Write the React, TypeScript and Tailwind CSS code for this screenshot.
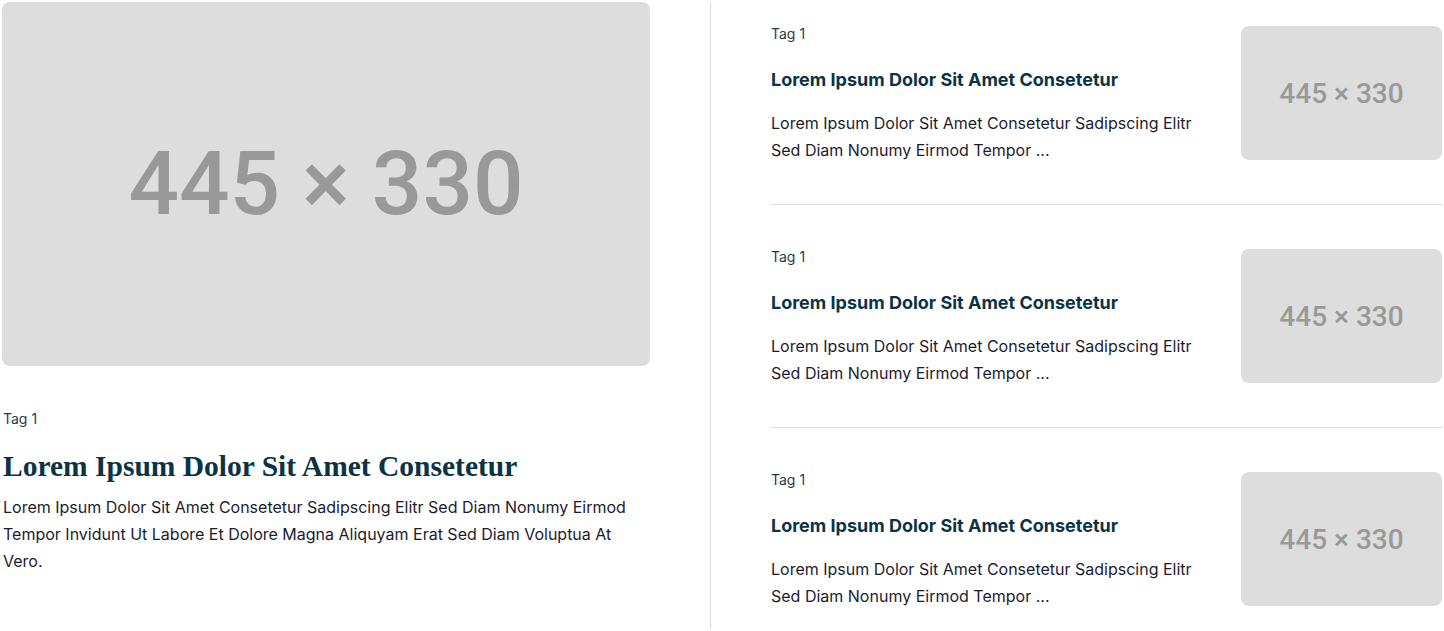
import React from "react";

const sans = { fontFamily: "Inter, 'Noto Sans', sans-serif" };

function Placeholder({ className, textClass }: { className: string; textClass: string }) {
  return (
    <div className={`flex items-center justify-center bg-[#dddddd] ${className}`}>
      <span className={`text-[#999999] font-medium ${textClass}`} style={{ fontFamily: "Roboto, 'Liberation Sans', sans-serif" }}>
        445 × 330
      </span>
    </div>
  );
}

function Card({ first, last }: { first?: boolean; last?: boolean }) {
  return (
    <div className={`flex gap-[24px] ${first ? "pt-[24px]" : "pt-[44px]"} ${last ? "" : "pb-[44px] border-b border-[#dddddd]"}`}>
      <div className="flex-1 h-[134px]">
        <div className="text-[14px] leading-[18px] text-[#2c3a44] mt-[-1px]">Tag 1</div>
        <h3 className="mt-[25px] text-[18px] leading-[24px] font-bold text-[#0b3344]">Lorem Ipsum Dolor Sit Amet Consetetur</h3>
        <p className="mt-[18px] text-[16px] leading-[27px] text-[#1c1c2e]">
          Lorem Ipsum Dolor Sit Amet Consetetur Sadipscing Elitr Sed Diam Nonumy Eirmod Tempor ...
        </p>
      </div>
      <Placeholder className="w-[201px] h-[134px] rounded-lg shrink-0 pt-[1px]" textClass="text-[28px]" />
    </div>
  );
}

export default function App() {
  return (
    <div className="flex p-[2px] bg-white min-h-[631px]" style={sans}>
      <div className="w-[648px] shrink-0">
        <Placeholder className="w-[648px] h-[364px] rounded-lg" textClass="text-[89px]" />
        <div className="mt-[44px] text-[14px] leading-[18px] text-[#2c3a44] pl-[1px]">Tag 1</div>
        <h2
          className="mt-[21px] text-[29.5px] leading-[34px] font-bold text-[#0b3344] pl-[1px]"
          style={{ fontFamily: "'Liberation Serif', 'DejaVu Serif', serif" }}
        >
          Lorem Ipsum Dolor Sit Amet Consetetur
        </h2>
        <p className="mt-[11px] text-[16px] leading-[27px] text-[#1c1c2e] pl-[1px]">
          Lorem Ipsum Dolor Sit Amet Consetetur Sadipscing Elitr Sed Diam Nonumy Eirmod Tempor Invidunt Ut Labore Et Dolore Magna Aliquyam Erat Sed Diam Voluptua At Vero.
        </p>
      </div>
      <div className="w-px bg-[#dddddd] mx-[60px] shrink-0" />
      <div className="flex-1">
        <Card first />
        <Card />
        <Card last />
      </div>
    </div>
  );
}
